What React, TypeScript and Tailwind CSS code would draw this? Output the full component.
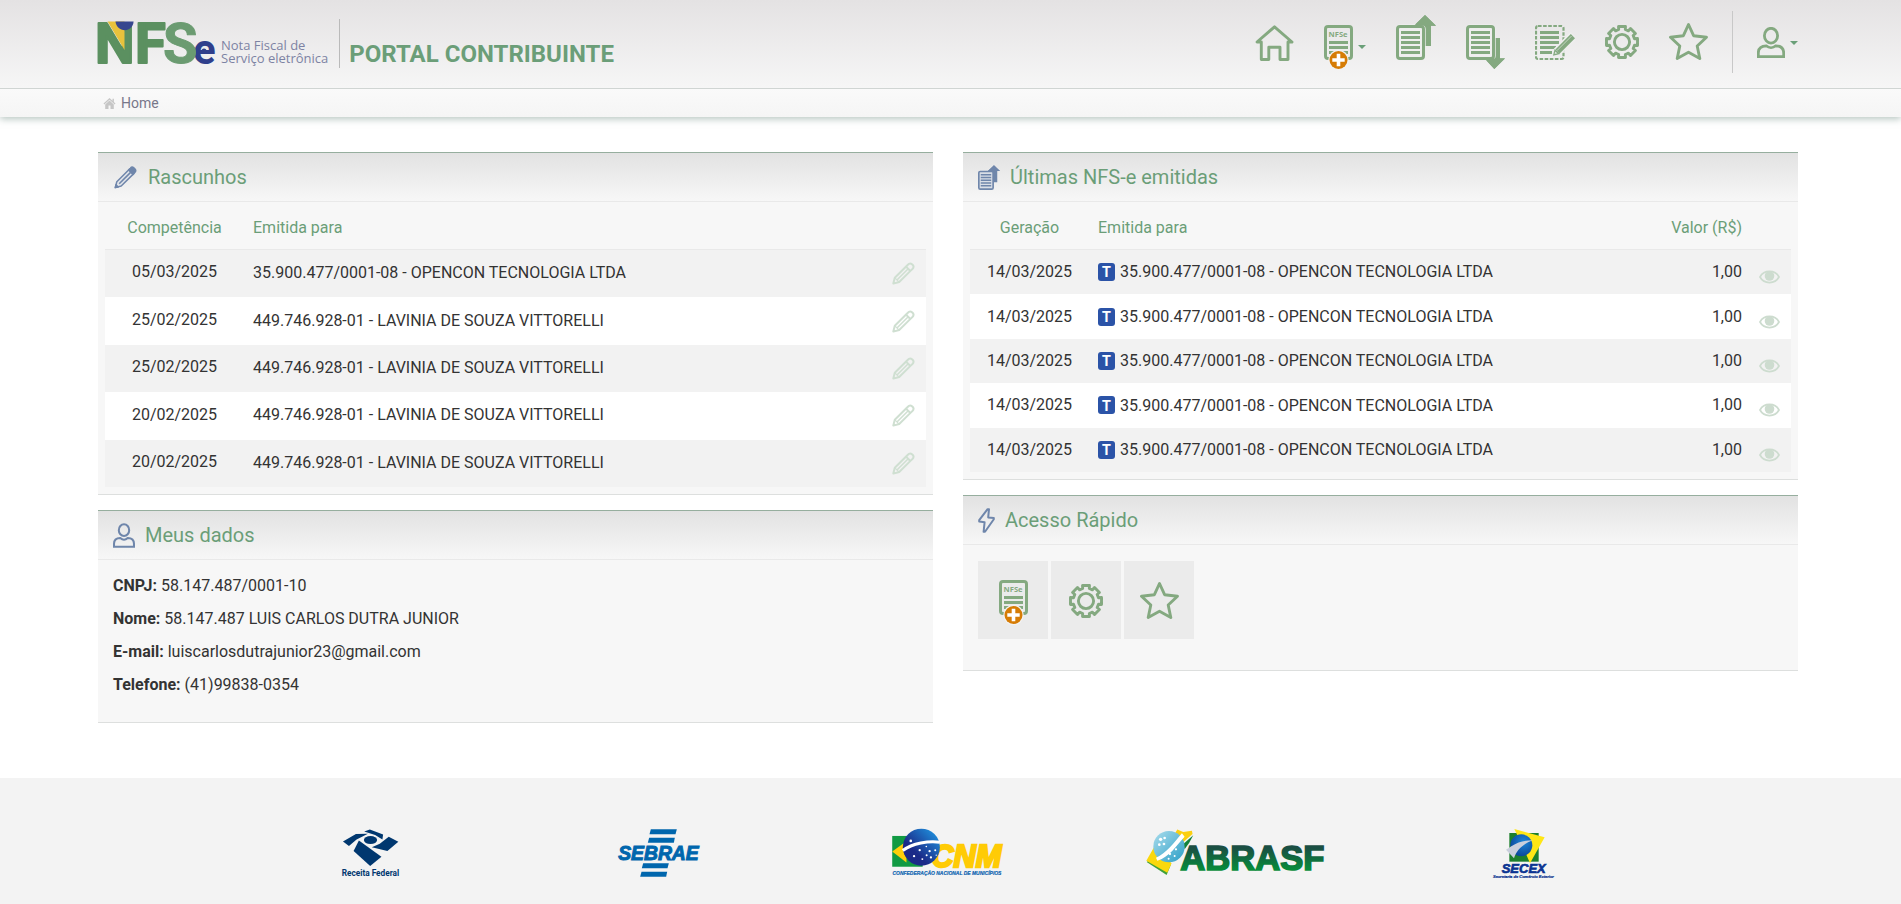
import React from "react";

type IconProps = { className?: string };

/* ---------- Icons ---------- */

function HomeIcon() {
  return (
    <svg width="39" height="55" viewBox="0 0 39 55" fill="none" stroke="#84a980" strokeWidth="2.9" strokeLinejoin="round">
      <path d="M19.5 11.8 L37 27 H33 V44.5 H25 V32.3 H13.8 V44.5 H6.3 V27 H2 Z" />
    </svg>
  );
}

function NewNoteIcon() {
  return (
    <svg width="29" height="55" viewBox="0 0 29 55">
      <rect x="1.5" y="11.5" width="26" height="32" rx="2.5" fill="none" stroke="#84a980" strokeWidth="3" />
      <path d="M5 27.5H24M5 32.5H24M5 37.5H24" stroke="#84a980" strokeWidth="3" />
      <text x="4.6" y="21.8" fontSize="7.6" fontWeight="700" fill="#84a980" fontFamily="'Open Sans', sans-serif">NFSe</text>
      <circle cx="14.5" cy="45" r="10.2" fill="#f2f2f2" />
      <circle cx="14.5" cy="45" r="9" fill="#d67c05" />
      <path d="M14.5 38.8V51.2M8.3 45H20.7" stroke="#fff" strokeWidth="3.6" />
    </svg>
  );
}

function DocLines({ color }: { color: string }) {
  return (
    <g>
      <rect x="1.5" y="11.5" width="26" height="32" rx="2.5" fill="#efefef" stroke="#eeeeee" strokeWidth="4.4" />
      <rect x="1.5" y="11.5" width="26" height="32" rx="2.5" fill="none" stroke={color} strokeWidth="3" />
      <path d="M5 17.5H24M5 22.5H24M5 27.5H24M5 32.5H24M5 37.5H24" stroke={color} strokeWidth="3" />
    </g>
  );
}

function IssuedIcon() {
  return (
    <svg width="40" height="55" viewBox="0 0 40 55">
      <path d="M29 0L40 10.8H35V31H26V10.8H18Z" fill="#84a980" />
      <DocLines color="#84a980" />
      <path d="M29 0L40 10.8H18Z" fill="#84a980" />
    </svg>
  );
}

function IssuedSmallIcon() {
  return (
    <svg width="22" height="25" viewBox="0 0 40 45">
      <path d="M29 0L40 10.8H35V31H26V10.8H18Z" fill="#6f86ab" />
      <rect x="1.5" y="11.5" width="26" height="32" rx="2.5" fill="#d9dee6" stroke="#6f86ab" strokeWidth="3" />
      <path d="M5 17.5H24M5 22.5H24M5 27.5H24M5 32.5H24M5 37.5H24" stroke="#6f86ab" strokeWidth="2.8" />
      <path d="M29 0L40 10.8H18Z" fill="#6f86ab" />
    </svg>
  );
}

function ReceivedIcon() {
  return (
    <svg width="39" height="55" viewBox="0 0 39 55">
      <path d="M28.3 54L39 43.3H34V23H26V43.3H18.5Z" fill="#84a980" />
      <DocLines color="#84a980" />
      <path d="M28.3 54L39 43.6H18.5Z" fill="#84a980" />
    </svg>
  );
}

function DraftIcon() {
  return (
    <svg width="40" height="55" viewBox="0 0 40 55">
      <rect x="1" y="11" width="27.5" height="33" rx="2" fill="none" stroke="#84a980" strokeWidth="2.2" strokeDasharray="3.6 1.5" />
      <path d="M5 17.5H24M5 22.5H24M5 27.5H24M5 32.5H21M5 37.5H17" stroke="#84a980" strokeWidth="3" />
      <path d="M17.5 41L19 34.5L35.5 18L41 23.5L24.5 39.8Z" fill="#eeeeee" stroke="#eeeeee" strokeWidth="1.4" />
      <path d="M20.4 34.5L35.8 19L40 23.2L24.5 38.8Z" fill="#84a980" />
      <path d="M18.8 39.9L20 35.2L23.8 38.7Z" fill="#dfe8dd" stroke="#84a980" strokeWidth="1.3" />
      <path d="M22 35.6L36.6 21" stroke="#d4dfd2" strokeWidth="0.8" />
    </svg>
  );
}

const gearOutline = (() => {
  const points: string[] = [];
  for (let i = 0; i < 8; i++) {
    const mid = (i * Math.PI) / 4 - Math.PI / 2;
    const corners: [number, number][] = [
      [-0.26, 12.9],
      [-0.22, 15.9],
      [0.22, 15.9],
      [0.26, 12.9],
    ];
    for (const [offset, radius] of corners) {
      points.push(`${(17 + radius * Math.cos(mid + offset)).toFixed(2)},${(27 + radius * Math.sin(mid + offset)).toFixed(2)}`);
    }
  }
  return points.join(" ");
})();

function GearIcon() {
  return (
    <svg width="34" height="55" viewBox="0 0 34 55" fill="none" stroke="#84a980" strokeWidth="2.9" strokeLinejoin="round">
      <polygon points={gearOutline} />
      <circle cx="17" cy="27" r="7.6" />
    </svg>
  );
}

function StarIcon() {
  return (
    <svg width="39" height="55" viewBox="0 0 39 55" fill="none" stroke="#84a980" strokeWidth="2.9" strokeLinejoin="round">
      <path d="M19.5 9.5L24.6 20.7L37.5 22.2L28.2 31L30.8 43.5L19.5 37.3L8.2 43.5L10.8 31L1.5 22.2L14.4 20.7Z" />
    </svg>
  );
}

function UserShape({ color, width }: { color: string; width: number }) {
  return (
    <g fill="none" stroke={color} strokeWidth={width}>
      <ellipse cx="14" cy="8.7" rx="6.6" ry="7.4" />
      <path d="M1.3 29.7V26C1.3 21.4 4.6 19 9.2 18.8C12 21.2 16 21.2 18.8 18.8C23.4 19 26.7 21.4 26.7 26V29.7Z" />
    </g>
  );
}

function PencilIcon({ className }: IconProps) {
  return (
    <svg className={className} width="23" height="23" viewBox="0 0 23 23" fill="none" stroke="currentColor" strokeWidth="2" strokeLinejoin="round">
      <path d="M1.3 21.6L2.8 15.8L15.6 3C17 1.4 18.6 1 20 2.2L20.8 3C22 4.4 21.6 6 20 7.4L7.2 20Z" />
      <path d="M14 4.6L18.4 9" />
      <path d="M16 7L5.2 17.8" strokeWidth="1.5" />
      <path d="M3.2 16.2L6.8 19.8" strokeWidth="1.2" />
    </svg>
  );
}

function PencilSolidIcon() {
  return (
    <svg width="23" height="23" viewBox="0 0 23 23" stroke="#6f86ab" strokeWidth="1.5" strokeLinejoin="round">
      <path d="M1.3 21.6L2.8 15.8L15.6 3L20 7.4L7.2 20Z" fill="#e2e5ea" />
      <path d="M14.6 4L16.4 2.2C17.4 1 18.8 1 19.8 1.8L21 3C22 4.2 21.8 5.6 20.6 6.6L19 8.4Z" fill="#6f86ab" />
      <path d="M16.6 6.4L5.2 17.8" strokeWidth="1.6" />
      <path d="M1.3 21.6L2 18.8L4.2 21Z" fill="#6f86ab" />
    </svg>
  );
}

function BoltIcon() {
  return (
    <svg width="17" height="25" viewBox="0 0 17 25" fill="none" stroke="#6f86ab" strokeWidth="2" strokeLinejoin="round">
      <path d="M9.6 1.2L1.2 12.2V13.6L6.6 14.2L5.6 23.8H7L15.8 11.2V10L10.2 9.4L11 1.2Z" />
    </svg>
  );
}

function EyeIcon() {
  return (
    <svg width="21" height="14" viewBox="0 0 21 14">
      <path d="M1 7C5 -0.4 16 -0.4 20 7C16 14.4 5 14.4 1 7Z" fill="none" stroke="currentColor" strokeWidth="1.7" />
      <circle cx="10.5" cy="6" r="4.8" fill="currentColor" />
    </svg>
  );
}

function Caret() {
  return (
    <svg width="8" height="4" viewBox="0 0 8 4">
      <path d="M0 0H8L4 4Z" fill="#6a9f78" />
    </svg>
  );
}

/* ---------- Logos ---------- */

function NfseLogo() {
  return (
    <svg width="117" height="46" viewBox="0 0 117 46" className="overflow-visible" role="img" aria-label="NFSe">
      <g fontFamily="'Roboto', sans-serif" fontWeight="700" strokeLinejoin="round">
        <text x="-3" y="43.5" fontSize="56" fill="#5b9060" stroke="#5b9060" strokeWidth="2">N</text>
        <path d="M9.5 2.6H26.5V31L10.5 4Z" fill="#e8c23c" />
        <path d="M17.5 2.6H35.6C35.2 8 31.6 11.2 26.8 11.2C22 11.2 18 8 17.5 2.6Z" fill="#37478f" />
        <text x="37" y="43.5" fontSize="56" fill="#5b9060" stroke="#5b9060" strokeWidth="2">F</text>
        <text x="95" y="44.5" fontSize="42" fill="#2f3f8c">e</text>
        <text x="65" y="43.5" fontSize="56" fill="#6b9b71" stroke="#6b9b71" strokeWidth="1">S</text>
      </g>
      <circle cx="106" cy="32" r="2.5" fill="#2f3f8c" />
    </svg>
  );
}

function ReceitaLogo() {
  return (
    <svg width="57" height="48" viewBox="66 177 172 144" className="overflow-visible" role="img" aria-label="Receita Federal">
      <g fill="#00376f">
        <path d="M69 214L108 192L144 191L128 199L110 208L87 228Z" />
        <path d="M133 184L150 178L190 193L188 208L166 195Z" />
        <ellipse cx="152" cy="210" rx="20" ry="12" />
        <path d="M156 232L180 221L207 200L236 215L203 243Z" />
        <path d="M101 243L117 211L185 260L151 288Z" />
      </g>
      <text x="65" y="317" fontSize="25" fontWeight="700" fill="#00376f" fontFamily="'Roboto', sans-serif">Receita Federal</text>
    </svg>
  );
}

function SebraeLogo() {
  return (
    <svg width="82" height="48" viewBox="893 177 245 144" className="overflow-visible" role="img" aria-label="SEBRAE">
      <g fill="#0066ad">
        <path d="M991 178H1069L1065 193H987Z" />
        <path d="M986 203H1063L1060 218H982Z" />
        <path d="M968 280H1045L1041 295H964Z" />
        <path d="M963 305H1040L1037 320H959Z" />
        <text x="893" y="269" fontSize="58" fontWeight="700" fontStyle="italic" stroke="#0066ad" strokeWidth="3" fontFamily="'Liberation Sans', sans-serif">SEBRAE</text>
      </g>
    </svg>
  );
}

function CnmLogo() {
  return (
    <svg width="109" height="47" viewBox="69 57 328 142" className="overflow-visible" role="img" aria-label="CNM">
      <defs>
        <linearGradient id="cnm-globe" x1="0" y1="1" x2="1" y2="0">
          <stop offset="0.35" stopColor="#1b2a88" />
          <stop offset="1" stopColor="#1fa0ea" />
        </linearGradient>
      </defs>
      <rect x="69" y="78" width="92" height="93" fill="#119a43" />
      <path d="M69 125L112 94V158Z" fill="#ffcf0a" />
      <text x="187" y="172" fontSize="93" fontWeight="700" fontStyle="italic" fill="#ffcb05" stroke="#ffcb05" strokeWidth="7" fontFamily="'Liberation Sans', sans-serif">CNM</text>
      <circle cx="157" cy="112" r="56" fill="url(#cnm-globe)" />
      <path d="M101 122C130 100 180 92 213 97" fill="none" stroke="#fff" strokeWidth="9" />
      <g fill="#fff">
        <circle cx="125" cy="93" r="4" />
        <circle cx="135" cy="139" r="3.5" />
        <circle cx="152" cy="121" r="3.5" />
        <circle cx="160" cy="148" r="3" />
        <circle cx="172" cy="110" r="2.5" />
        <circle cx="182" cy="124" r="3.5" />
        <circle cx="173" cy="136" r="3" />
        <circle cx="199" cy="121" r="3" />
        <circle cx="186" cy="143" r="3.5" />
        <circle cx="202" cy="136" r="2" />
      </g>
      <text x="70" y="195" fontSize="15" fontWeight="700" fontStyle="italic" fill="#0a62b0" stroke="#0a62b0" strokeWidth="0.5" fontFamily="'Liberation Sans', sans-serif">CONFEDERAÇÃO NACIONAL DE MUNICÍPIOS</text>
    </svg>
  );
}

function AbrasfLogo() {
  return (
    <svg width="179" height="46" viewBox="828 57 538 138" className="overflow-visible" role="img" aria-label="ABRASF">
      <defs>
        <linearGradient id="abrasf-text" x1="0" y1="0" x2="0" y2="1">
          <stop offset="0.25" stopColor="#1a4f43" />
          <stop offset="0.8" stopColor="#078a3b" />
        </linearGradient>
        <linearGradient id="abrasf-globe" x1="0" y1="0" x2="1" y2="1">
          <stop offset="0" stopColor="#a9dcec" />
          <stop offset="1" stopColor="#2c9fc7" />
        </linearGradient>
      </defs>
      <path d="M830 156L890 195L902 166L888 150L850 140Z" fill="#3fa13a" />
      <path d="M940 102L970 76L958 98L944 118Z" fill="#12823a" />
      <path d="M829 152L852 112L905 160L892 188Z" fill="#fbd80d" />
      <path d="M914 72L922 58L940 66L966 62L968 72L936 100Z" fill="#fbcf10" />
      <circle cx="897" cy="110" r="47" fill="url(#abrasf-globe)" />
      <path d="M858 143C890 130 910 100 936 70L944 80C918 108 900 140 862 152Z" fill="#fff" />
      <g fill="#fff">
        <circle cx="872" cy="88" r="5" />
        <circle cx="884" cy="84" r="4" />
        <circle cx="868" cy="104" r="4" />
        <circle cx="882" cy="102" r="4" />
        <circle cx="918" cy="118" r="3.5" />
        <circle cx="900" cy="132" r="3.5" />
        <circle cx="914" cy="138" r="3" />
        <circle cx="896" cy="146" r="3" />
      </g>
      <text x="931" y="179" fontSize="104" fontWeight="700" fill="url(#abrasf-text)" stroke="url(#abrasf-text)" strokeWidth="5" fontFamily="'Liberation Sans', sans-serif">ABRASF</text>
    </svg>
  );
}

function SecexLogo() {
  return (
    <svg width="62" height="50" viewBox="69 54 186 150" className="overflow-visible" role="img" aria-label="SECEX">
      <defs>
        <radialGradient id="secex-globe" cx="0.6" cy="0.35" r="0.8">
          <stop offset="0" stopColor="#1c86d8" />
          <stop offset="1" stopColor="#073a8c" />
        </radialGradient>
      </defs>
      <rect x="118" y="66" width="88" height="86" fill="#1d7f2c" />
      <path d="M133 54L224 79L180 157L160 110Z" fill="#ffe615" />
      <circle cx="154" cy="103" r="33" fill="url(#secex-globe)" />
      <path d="M108 116L124 106C145 92 165 88 188 88C160 98 140 116 132 142Z" fill="#c9cfdc" />
      <text x="95" y="186" fontSize="39" fontWeight="700" fontStyle="italic" fill="#0b3391" stroke="#0b3391" strokeWidth="2" fontFamily="'Liberation Sans', sans-serif">SECEX</text>
      <text x="69" y="202" fontSize="12" fontWeight="700" fontStyle="italic" fill="#0b3391" stroke="#0b3391" strokeWidth="0.7" fontFamily="'Liberation Sans', sans-serif">Secretaria de Comércio Exterior</text>
    </svg>
  );
}

/* ---------- Panels ---------- */

function Panel({ title, icon, children }: { title: string; icon: React.ReactNode; children: React.ReactNode }) {
  return (
    <section className="border-t border-b border-t-[#96ae9e] border-b-[#dddfde] bg-[#f7f7f7]">
      <h2 className="flex h-[49px] items-center gap-[10px] border-b border-[#e9e9e9] bg-linear-to-b from-[#e2e2e2] to-[#f7f7f7] px-[15px] text-[20px] text-[#6b9e78]">
        {icon}
        <span>{title}</span>
      </h2>
      {children}
    </section>
  );
}

const drafts = [
  { date: "05/03/2025", name: "35.900.477/0001-08 - OPENCON TECNOLOGIA LTDA" },
  { date: "25/02/2025", name: "449.746.928-01 - LAVINIA DE SOUZA VITTORELLI" },
  { date: "25/02/2025", name: "449.746.928-01 - LAVINIA DE SOUZA VITTORELLI" },
  { date: "20/02/2025", name: "449.746.928-01 - LAVINIA DE SOUZA VITTORELLI" },
  { date: "20/02/2025", name: "449.746.928-01 - LAVINIA DE SOUZA VITTORELLI" },
];

const issued = Array.from({ length: 5 }, () => ({
  date: "14/03/2025",
  name: "35.900.477/0001-08 - OPENCON TECNOLOGIA LTDA",
  value: "1,00",
}));

function DraftsTable() {
  return (
    <div className="px-[7px] pt-[5px] pb-[7px]">
      <table className="h-[280px] w-full table-fixed">
        <thead>
          <tr className="h-[42px] border-b border-[#e9e9e9] text-[#6b9e78]">
            <th className="w-[139px] font-normal">Competência</th>
            <th className="px-[9px] text-left font-normal">Emitida para</th>
            <th className="w-[45px]" aria-label="Ações" />
          </tr>
        </thead>
        <tbody>
          {drafts.map((row, i) => (
            <tr key={i} className="odd:bg-[#f2f2f2] even:bg-white">
              <td className="pb-[3px] text-center">{row.date}</td>
              <td className="px-[9px] pb-[2px]">{row.name}</td>
              <td>
                <a href="#editar" aria-label="Editar rascunho" className="flex justify-end pr-[11px] text-[#cfdfd1]">
                  <PencilIcon />
                </a>
              </td>
            </tr>
          ))}
        </tbody>
      </table>
    </div>
  );
}

function IssuedTable() {
  return (
    <div className="px-[7px] pt-[5px] pb-[7px]">
      <table className="h-[265px] w-full table-fixed">
        <thead>
          <tr className="h-[42px] border-b border-[#e9e9e9] text-[#6b9e78]">
            <th className="w-[119px] font-normal">Geração</th>
            <th className="px-[9px] text-left font-normal">Emitida para</th>
            <th className="w-[120px] px-[9px] text-right font-normal">Valor (R$)</th>
            <th className="w-[40px]" aria-label="Ações" />
          </tr>
        </thead>
        <tbody>
          {issued.map((row, i) => (
            <tr key={i} className="odd:bg-[#f2f2f2] even:bg-white">
              <td className="pb-[1px] text-center">{row.date}</td>
              <td className="px-[9px]">
                <div className="flex items-center gap-[5px]">
                  <span className="flex h-[18px] w-[17px] items-center justify-center rounded-[3px] bg-[#2b53a7] font-['Inter',sans-serif] text-[14px] font-bold text-white">
                    T
                  </span>
                  <span>{row.name}</span>
                </div>
              </td>
              <td className="px-[9px] pb-[1px] text-right">{row.value}</td>
              <td>
                <a href="#visualizar" aria-label="Visualizar nota" className="flex justify-end pt-[10px] pr-[11px] text-[#cddccf]">
                  <EyeIcon />
                </a>
              </td>
            </tr>
          ))}
        </tbody>
      </table>
    </div>
  );
}

const profile = [
  ["CNPJ:", "58.147.487/0001-10"],
  ["Nome:", "58.147.487 LUIS CARLOS DUTRA JUNIOR"],
  ["E-mail:", "luiscarlosdutrajunior23@gmail.com"],
  ["Telefone:", "(41)99838-0354"],
];

export default function App() {
  return (
    <div className="flex min-h-screen flex-col bg-white font-['Roboto',sans-serif] text-[16px] leading-[23px] text-[#333333]">
      <header className="shadow-[0_2px_7px_rgba(110,140,130,0.5)]">
        <div className="border-b border-[#d0d5d3] bg-linear-to-b from-[#e4e2e3] to-[#f6f6f6]">
          <div className="flex h-[88px] items-start pr-[103px] pl-[98px]">
            <a href="#inicio" className="flex items-end gap-[6px] pt-[19px]">
              <NfseLogo />
              <span className="font-['Open_Sans',sans-serif] text-[13px] leading-[13px] whitespace-nowrap text-[#7d83a3]">
                Nota Fiscal de
                <br />
                Serviço eletrônica
              </span>
            </a>
            <h1 className="mt-[19px] ml-[11px] h-[49px] border-l border-[#bababa] pt-[24px] pl-[9px] text-[24px] font-bold whitespace-nowrap text-[#6b9e78]">
              PORTAL CONTRIBUINTE
            </h1>
            <nav className="ml-auto flex items-start gap-[30px] pt-[15px]" aria-label="Menu principal">
              <a href="#home" aria-label="Home"><HomeIcon /></a>
              <button type="button" aria-label="Nova NFS-e" className="flex items-center gap-[5px]">
                <NewNoteIcon />
                <span className="pt-[9px]"><Caret /></span>
              </button>
              <a href="#emitidas" aria-label="Notas emitidas"><IssuedIcon /></a>
              <a href="#recebidas" aria-label="Notas recebidas"><ReceivedIcon /></a>
              <a href="#rascunhos" aria-label="Rascunhos"><DraftIcon /></a>
              <a href="#configuracoes" aria-label="Configurações"><GearIcon /></a>
              <a href="#favoritos" aria-label="Favoritos"><StarIcon /></a>
            </nav>
            <div className="mt-[11px] ml-[24px] h-[62px] border-l border-[#c8c8c8] pl-[24px]">
              <button type="button" aria-label="Perfil" className="flex items-center gap-[5px] pt-[16px]">
                <svg width="28" height="31" viewBox="0 0 28 31">
                  <UserShape color="#84a980" width={2.8} />
                </svg>
                <Caret />
              </button>
            </div>
          </div>
        </div>
        <nav className="flex h-[28px] items-center gap-[5px] bg-linear-to-b from-[#fafafa] to-[#f5f5f5] pr-[103px] pl-[103px] text-[14px]" aria-label="Trilha">
          <svg width="13" height="11" viewBox="0 0 12 11" fill="#c6c6c6">
            <path d="M6 0L12 5.6L11.2 6.4L6 1.8L0.8 6.4L0 5.6L3 2.8ZM9 0.8H10.4V4L9 2.8Z" />
            <path d="M6 2.6L10.3 6.4V11H7V7.6H5V11H1.7V6.4Z" />
          </svg>
          <a href="#home" className="text-[#77778a]">Home</a>
        </nav>
      </header>

      <main className="grid grid-cols-2 items-start gap-[30px] pt-[35px] pr-[103px] pb-[55px] pl-[98px]">
        <div className="flex flex-col gap-[15px]">
          <Panel
            title="Rascunhos"
            icon={
              <span className="flex w-[25px] justify-center">
                <PencilSolidIcon />
              </span>
            }
          >
            <DraftsTable />
          </Panel>
          <Panel
            title="Meus dados"
            icon={
              <svg width="22" height="25" viewBox="0 0 28 31">
                <UserShape color="#6f86ab" width={2.6} />
              </svg>
            }
          >
            <dl className="flex flex-col gap-[10px] px-[15px] pt-[14px] pb-[26px]">
              {profile.map(([label, value]) => (
                <div key={label} className="flex gap-[4px]">
                  <dt className="font-bold">{label}</dt>
                  <dd>{value}</dd>
                </div>
              ))}
            </dl>
          </Panel>
        </div>
        <div className="flex flex-col gap-[15px]">
          <Panel title="Últimas NFS-e emitidas" icon={<IssuedSmallIcon />}>
            <IssuedTable />
          </Panel>
          <Panel title="Acesso Rápido" icon={<BoltIcon />}>
            <div className="flex gap-[3px] px-[15px] pt-[16px] pb-[31px]">
              <a href="#nova" aria-label="Nova NFS-e" className="flex h-[78px] w-[70px] items-center justify-center bg-[#ebebeb] pb-[6px]">
                <NewNoteIcon />
              </a>
              <a href="#configuracoes" aria-label="Configurações" className="flex h-[78px] w-[70px] items-center justify-center bg-[#ebebeb] pt-[3px]">
                <GearIcon />
              </a>
              <a href="#favoritos" aria-label="Favoritos" className="flex h-[78px] w-[70px] items-center justify-center bg-[#ebebeb] pt-[3px]">
                <StarIcon />
              </a>
            </div>
          </Panel>
        </div>
      </main>

      <footer className="grow bg-[#f3f3f3] pr-[103px] pl-[98px]">
        <div className="grid grid-cols-5 justify-items-center pt-[51px] pr-[130px] pb-[25px] pl-[128px]">
          <ReceitaLogo />
          <SebraeLogo />
          <CnmLogo />
          <AbrasfLogo />
          <SecexLogo />
        </div>
      </footer>
    </div>
  );
}
